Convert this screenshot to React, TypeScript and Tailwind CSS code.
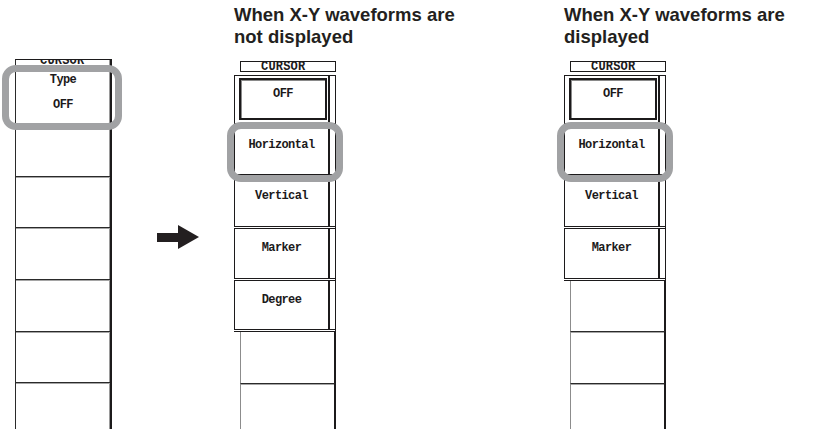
const mono = "font-['Liberation_Mono','DejaVu_Sans_Mono',monospace] font-bold text-[12px] leading-[14px] tracking-[-0.6px] text-[#1c1a1b]";

function Header() {
  return (
    <div className="ml-[6px] w-[96px] h-[11px] border-t border-x border-[#1c1a1b] flex items-end">
      <div className="w-full h-[10px] border-b border-[#1c1a1b] pl-[20px]">
        <span className="block font-['Liberation_Mono','DejaVu_Sans_Mono',monospace] font-bold text-[12px] leading-[10px] tracking-[0.2px] text-[#1c1a1b]">
          CURSOR
        </span>
      </div>
    </div>
  );
}

function MenuRow({ label, h, pressed }: { label: string; h: string; pressed?: boolean }) {
  return (
    <div className={`flex w-full ${h} border-b-[3px] border-double border-b-[#1c1a1b]`}>
      <div className="w-[96px] h-full border-l border-l-[#1c1a1b] border-r-2 border-r-[#1c1a1b]">
        {pressed ? (
          <div className="ml-[4px] mt-[2px] mr-[1px] h-[42px] border-2 border-[#1c1a1b] shadow-[inset_1px_1px_0_#8a8a8a] flex justify-center pt-[7px]">
            <span className={mono}>{label}</span>
          </div>
        ) : (
          <div className="flex justify-center pt-[12px]">
            <span className={mono}>{label}</span>
          </div>
        )}
      </div>
    </div>
  );
}

function EmptyCell({ h }: { h: string }) {
  return (
    <div
      className={`ml-[6px] w-[96px] ${h} border-l border-l-[#8c8c8c] border-r-2 border-r-[#1c1a1b] border-b border-b-[#2a2a2a] shadow-[0_1px_0_#a5a5a5]`}
    />
  );
}

function Title({ second }: { second: string }) {
  return (
    <div className="pt-[4px] font-['Liberation_Sans',Arial,sans-serif] font-bold text-[18.5px] leading-[22px] text-[#231f20] whitespace-nowrap">
      When X-Y waveforms are
      <br />
      {second}
    </div>
  );
}

function Highlight({ className }: { className: string }) {
  return (
    <div className={`absolute border-[7px] border-[#a1a2a4] rounded-[14px] pointer-events-none ${className}`} />
  );
}

function LeftCell({ h }: { h: string }) {
  return (
    <div
      className={`w-full ${h} border-b border-b-[#2a2a2a] shadow-[0_1px_0_#a5a5a5]`}
    />
  );
}

export default function App() {
  return (
    <div className="relative w-[832px] h-[429px] overflow-hidden bg-white flex items-start">
      {/* soft keys before pressing CURSOR */}
      <div className="ml-[15px] mt-[59px] w-[97px] border-t border-t-[#1c1a1b] border-l border-l-[#2a2a2a] border-r-2 border-r-[#1c1a1b] shadow-[inset_-1px_0_0_#9a9a9a]">
        <div className="w-full h-[65px] border-b border-b-[#2a2a2a] shadow-[0_1px_0_#a5a5a5]">
          <div className="h-[6px] overflow-hidden pl-[24px]">
            <span className="block -mt-[4px] font-['Liberation_Mono','DejaVu_Sans_Mono',monospace] font-bold text-[12px] leading-[10px] tracking-[0.2px] text-[#1c1a1b]">
              CURSOR
            </span>
          </div>
          <div className={`flex flex-col items-center pt-[7px] gap-[11px] ${mono}`}>
            <span>Type</span>
            <span>OFF</span>
          </div>
        </div>
        <LeftCell h="h-[52px]" />
        <LeftCell h="h-[51px]" />
        <LeftCell h="h-[52px]" />
        <LeftCell h="h-[52px]" />
        <LeftCell h="h-[51px]" />
        <LeftCell h="h-[60px]" />
      </div>

      {/* arrow */}
      <svg className="ml-[45px] mt-[225px] shrink-0" width="42" height="24" viewBox="0 0 42 24">
        <rect x="0" y="8" width="22" height="9" fill="#231f20" />
        <polygon points="21,0 21,24 42,12" fill="#231f20" />
      </svg>

      {/* not displayed */}
      <div className="ml-[35px] w-[330px] shrink-0 flex flex-col">
        <Title second="not displayed" />
        <div className="mt-[13px]">
          <Header />
        </div>
        <div className="mt-[3px] w-[102px] border-t border-t-[#1c1a1b] border-r border-r-[#1c1a1b]">
          <MenuRow label="OFF" h="h-[50px]" pressed />
          <MenuRow label="Horizontal" h="h-[51px]" />
          <MenuRow label="Vertical" h="h-[52px]" />
          <MenuRow label="Marker" h="h-[52px]" />
          <MenuRow label="Degree" h="h-[51px]" />
        </div>
        <EmptyCell h="h-[52px]" />
        <EmptyCell h="h-[60px]" />
      </div>

      {/* displayed */}
      <div className="w-[240px] shrink-0 flex flex-col">
        <Title second="displayed" />
        <div className="mt-[13px]">
          <Header />
        </div>
        <div className="mt-[3px] w-[102px] border-t border-t-[#1c1a1b] border-r border-r-[#1c1a1b]">
          <MenuRow label="OFF" h="h-[50px]" pressed />
          <MenuRow label="Horizontal" h="h-[51px]" />
          <MenuRow label="Vertical" h="h-[52px]" />
          <MenuRow label="Marker" h="h-[52px]" />
        </div>
        <EmptyCell h="h-[51px]" />
        <EmptyCell h="h-[52px]" />
        <EmptyCell h="h-[60px]" />
      </div>

      <Highlight className="left-[2px] top-[65px] w-[120px] h-[65px]" />
      <Highlight className="left-[227px] top-[122px] w-[116px] h-[60px]" />
      <Highlight className="left-[557px] top-[122px] w-[116px] h-[60px]" />
    </div>
  );
}
